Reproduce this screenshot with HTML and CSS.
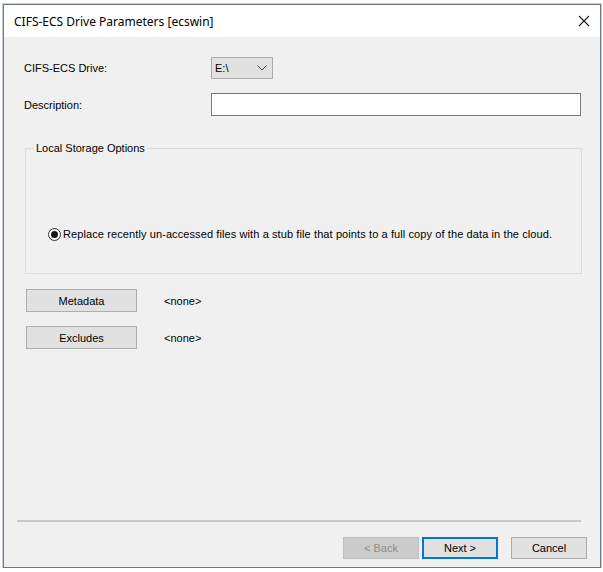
FILE: index.html
```html
<!DOCTYPE html>
<html>
<head>
<meta charset="utf-8">
<link rel="stylesheet" href="styles.css">
</head>
<body>
<div class="window">
  <div class="titlebar">
    <span class="title">CIFS-ECS Drive Parameters [ecswin]</span>
    <svg class="close" width="12" height="12" viewBox="0 0 12 12"><path d="M1 1L11 11M11 1L1 11" stroke="#1e1e1e" stroke-width="1.1" fill="none"/></svg>
  </div>
  <div class="content">
    <div class="form-grid">
      <label class="lbl">CIFS-ECS Drive:</label>
      <div class="combo"><span>E:\</span><svg width="10" height="6" viewBox="0 0 10 6"><path d="M0.5 0.5L5 5L9.5 0.5" stroke="#444" stroke-width="1" fill="none"/></svg></div>
      <label class="lbl">Description:</label>
      <div class="textbox"></div>
    </div>
    <fieldset class="group">
      <legend>Local Storage Options</legend>
      <div class="radio-row">
        <span class="radio"><span class="dot"></span></span>
        <span class="radio-text">Replace recently un-accessed files with a stub file that points to a full copy of the data in the cloud.</span>
      </div>
    </fieldset>
    <div class="btn-row first">
      <button class="btn wide">Metadata</button>
      <span class="none">&lt;none&gt;</span>
    </div>
    <div class="btn-row">
      <button class="btn wide">Excludes</button>
      <span class="none">&lt;none&gt;</span>
    </div>
    <div class="separator"></div>
    <div class="footer">
      <button class="btn nav disabled">&lt; Back</button>
      <button class="btn nav default">Next &gt;</button>
      <button class="btn nav cancel">Cancel</button>
    </div>
  </div>
</div>
</body>
</html>
```
FILE: styles.css
```css
html, body {
  margin: 0;
  padding: 0;
  background: #ffffff;
}
body {
  font-family: "Liberation Sans", Arial, sans-serif;
  font-size: 11px;
  color: #000;
}
.window {
  margin: 4px 0 0 3px;
  width: 596px;
  height: 562px;
  border: 1px solid #6d7886;
  display: flex;
  flex-direction: column;
  background: #f0f0f0;
  box-shadow: 0 0 0 1px #c9cfd6;
}
.titlebar {
  height: 32px;
  background: #ffffff;
  display: flex;
  align-items: center;
  padding: 0 0 0 10px;
  flex: none;
}
.title {
  font-family: "Noto Sans", "Open Sans", sans-serif;
  font-size: 12px;
  flex: 1;
}
.close {
  margin-right: 10px;
}
.content {
  flex: 1;
  display: flex;
  flex-direction: column;
  padding: 20px 18px 8px 20px;
}
.form-grid {
  display: grid;
  grid-template-columns: 187px 370px;
  grid-template-rows: 22px 23px;
  row-gap: 14px;
  align-items: center;
}
.lbl {
  line-height: 14px;
}
.combo {
  background: #e1e1e1;
  border: 1px solid #adadad;
  display: flex;
  align-items: center;
  justify-content: space-between;
  padding: 0 5px 0 3px;
  box-sizing: border-box;
  width: 62px;
  height: 22px;
}
.textbox {
  width: 370px;
  height: 23px;
  box-sizing: border-box;
  background: #ffffff;
  border: 1px solid #7a7a7a;
}
.group {
  margin: 25px 0 0 1px;
  width: 557px;
  box-sizing: border-box;
  border: 1px solid #dcdcdc;
  padding: 0 8px 32px 8px;
  min-width: 0;
}
.group legend {
  padding: 0 2px;
  line-height: 14px;
}
.radio-row {
  margin-top: 72px;
  display: flex;
  align-items: center;
  line-height: 14px;
  margin-left: 14px;
}
.radio-text {
  letter-spacing: 0.1px;
  white-space: nowrap;
}
.radio {
  width: 11px;
  height: 11px;
  border: 1px solid #333;
  border-radius: 50%;
  display: flex;
  align-items: center;
  justify-content: center;
  background: #ffffff;
  margin-right: 2px;
  flex: none;
}
.dot {
  width: 7px;
  height: 7px;
  border-radius: 50%;
  background: #1a1a1a;
}
.btn-row {
  display: flex;
  align-items: center;
  margin-top: 14px;
  margin-left: 2px;
}
.btn-row.first {
  margin-top: 15px;
}
.btn {
  font-family: "Liberation Sans", Arial, sans-serif;
  font-size: 11px;
  background: #e1e1e1;
  border: 1px solid #adadad;
  padding: 0;
  color: #000;
  box-sizing: border-box;
}
.btn.wide {
  width: 111px;
  height: 23px;
}
.none {
  margin-left: 27px;
}
.separator {
  margin: auto 1px 0 -7px;
  height: 2px;
  background: #c8c8c8;
}
.footer {
  display: flex;
  justify-content: flex-end;
  margin-top: 15px;
  margin-right: -5px;
}
.btn.nav {
  width: 76px;
  height: 22px;
}
.btn.disabled {
  background: #cccccc;
  border-color: #bfbfbf;
  color: #8d8d8d;
}
.btn.default {
  margin-left: 3px;
  border: 1px solid #0078d7;
  box-shadow: inset 0 0 0 1px #0078d7;
}
.btn.cancel {
  margin-left: 13px;
}
```
